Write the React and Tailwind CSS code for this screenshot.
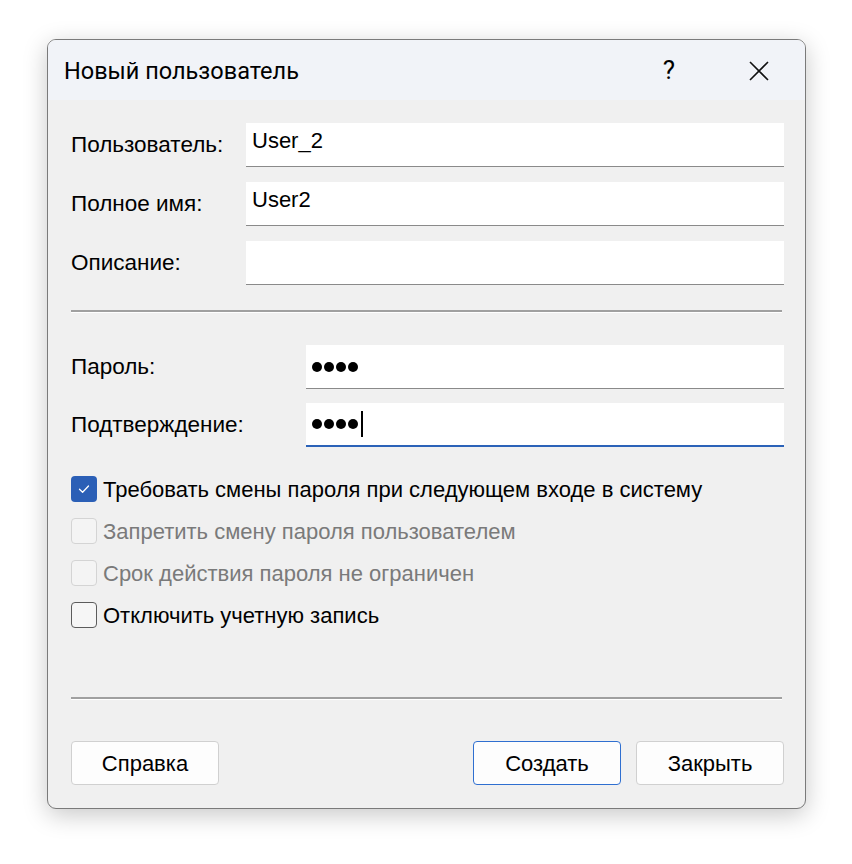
import React from "react";

const SANS = { fontFamily: '"Liberation Sans", Arial, sans-serif' };
const TITLE = { fontFamily: 'Roboto, "Liberation Sans", sans-serif' };

function Field({ label, value, labelW, focused, caret, dots }) {
  return (
    <div className="flex items-center">
      <div className={`${labelW} shrink-0 text-[22.5px] text-black`}>{label}</div>
      <div
        className={`flex-1 h-[44px] bg-white flex items-center pl-[6px] ${
          focused ? "border-b-2 border-[#2b62b8]" : "border-b border-[#8a8a8a]"
        }`}
      >
        {dots ? (
          <span className="flex items-center gap-[2px]">
            {[0, 1, 2, 3].map((i) => (
              <span key={i} className="w-[10px] h-[10px] rounded-full bg-black inline-block" />
            ))}
            {caret && <span className="ml-[1px] w-[2px] h-[26px] bg-black inline-block" />}
          </span>
        ) : (
          <span className="text-[22px] text-black leading-none -mt-[8px]">{value}</span>
        )}
      </div>
    </div>
  );
}

function Check({ label, checked, disabled }) {
  return (
    <div className="flex items-center h-[42px]">
      {checked ? (
        <span className="w-[26px] h-[26px] rounded-[4px] bg-[#2b5fb6] flex items-center justify-center">
          <svg width="14" height="14" viewBox="0 0 14 14" fill="none">
            <path d="M2.5 7.2 L5.6 10.2 L11.5 4" stroke="white" strokeWidth="1.3" strokeLinecap="round" strokeLinejoin="round" />
          </svg>
        </span>
      ) : (
        <span
          className={`w-[26px] h-[26px] rounded-[4px] border ${
            disabled ? "border-[#d4d4d4] bg-[#f4f4f4]" : "border-[#5c5c5c] bg-[#f6f6f6]"
          }`}
        />
      )}
      <span className={`ml-[6px] text-[22px] ${disabled ? "text-[#7a7a7a]" : "text-black"}`}>{label}</span>
    </div>
  );
}

function Btn({ children, primary }) {
  return (
    <div
      className={`w-[148px] h-[44px] rounded-[4px] bg-[#fdfdfd] flex items-center justify-center text-[22px] text-black border ${
        primary ? "border-[#2f6fd0]" : "border-[#d0d0d0]"
      }`}
    >
      {children}
    </div>
  );
}

export default function App() {
  return (
    <div className="w-[852px] h-[864px] bg-white pt-[39px] pl-[47px]" style={SANS}>
      <div className="w-[759px] h-[770px] rounded-[9px] border border-[#7a7a7a] bg-[#f0f0f0] overflow-hidden flex flex-col shadow-[0_6px_24px_rgba(0,0,0,0.22)]">
        <div className="h-[60px] shrink-0 bg-[#f1f3f8] flex items-center pl-[16px] pr-[36px]">
          <span className="flex-1 text-[23.5px] text-black pt-[4px]" style={TITLE}>
            Новый пользователь
          </span>
          <span className="text-[26px] text-black mr-[74px] pt-[0px] leading-none" style={TITLE}>?</span>
          <svg width="20" height="20" viewBox="0 0 20 20" className="mt-[2px]">
            <path d="M1 1 L19 19 M19 1 L1 19" stroke="#111" strokeWidth="1.6" />
          </svg>
        </div>
        <div className="flex-1 flex flex-col pl-[23px] pr-[21px] pt-[23px]">
          <div className="flex flex-col gap-[15px]">
            <Field label="Пользователь:" value="User_2" labelW="w-[175px]" />
            <Field label="Полное имя:" value="User2" labelW="w-[175px]" />
            <Field label="Описание:" value="" labelW="w-[175px]" />
          </div>
          <div className="mt-[25px] border-t-2 border-[#a0a0a0] border-b border-b-white mr-[2px]" />
          <div className="mt-[32px] flex flex-col gap-[14px]">
            <Field label="Пароль:" dots labelW="w-[235px]" />
            <Field label="Подтверждение:" dots caret focused labelW="w-[235px]" />
          </div>
          <div className="mt-[21px] flex flex-col">
            <Check label="Требовать смены пароля при следующем входе в систему" checked />
            <Check label="Запретить смену пароля пользователем" disabled />
            <Check label="Срок действия пароля не ограничен" disabled />
            <Check label="Отключить учетную запись" />
          </div>
          <div className="mt-[61px] border-t-2 border-[#a0a0a0] border-b border-b-white mr-[2px]" />
          <div className="mt-[41px] flex items-center">
            <Btn>Справка</Btn>
            <div className="flex-1" />
            <Btn primary>Создать</Btn>
            <div className="w-[15px]" />
            <Btn>Закрыть</Btn>
          </div>
        </div>
      </div>
    </div>
  );
}
